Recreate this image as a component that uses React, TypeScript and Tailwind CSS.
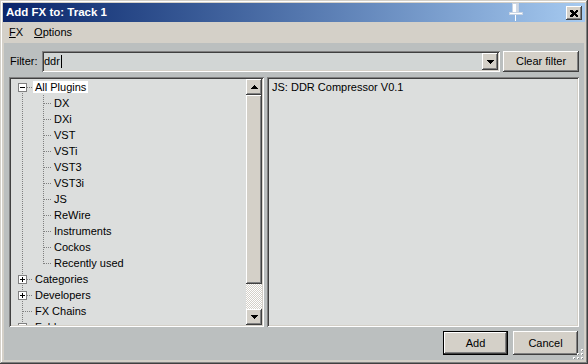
import React from 'react'

type Row = {
  label: string
  level: 0 | 1
  box?: 'minus' | 'plus'
  first?: boolean
  last?: boolean
  lastChild?: boolean
  selected?: boolean
}

const rows: Row[] = [
  { label: 'All Plugins', level: 0, box: 'minus', first: true, selected: true },
  { label: 'DX', level: 1 },
  { label: 'DXi', level: 1 },
  { label: 'VST', level: 1 },
  { label: 'VSTi', level: 1 },
  { label: 'VST3', level: 1 },
  { label: 'VST3i', level: 1 },
  { label: 'JS', level: 1 },
  { label: 'ReWire', level: 1 },
  { label: 'Instruments', level: 1 },
  { label: 'Cockos', level: 1 },
  { label: 'Recently used', level: 1, lastChild: true },
  { label: 'Categories', level: 0, box: 'plus' },
  { label: 'Developers', level: 0, box: 'plus' },
  { label: 'FX Chains', level: 0 },
  { label: 'Folders', level: 0, box: 'plus', last: true },
]

// classic 3d edges
const raised =
  'bg-[#d4d0c8] shadow-[inset_-1px_-1px_0_#404040,inset_1px_1px_0_#ffffff,inset_-2px_-2px_0_#808080,inset_2px_2px_0_#d4d0c8]'
const sunken =
  'shadow-[inset_1px_1px_0_#808080,inset_-1px_-1px_0_#ffffff,inset_2px_2px_0_#404040,inset_-2px_-2px_0_#d4d0c8]'

const dot = { stroke: '#808080', strokeWidth: 1, strokeDasharray: '1 1' }

function TreeLines({ row }: { row: Row }) {
  if (row.level === 1) {
    return (
      <svg width="41" height="16" className="shrink-0" shapeRendering="crispEdges">
        <line x1="11.5" y1="0" x2="11.5" y2="16" {...dot} />
        <line x1="32.5" y1="0" x2="32.5" y2={row.lastChild ? 9 : 16} {...dot} />
        <line x1="33" y1="8.5" x2="41" y2="8.5" {...dot} />
      </svg>
    )
  }
  return (
    <svg width="22" height="16" className="shrink-0" shapeRendering="crispEdges">
      <line
        x1="11.5"
        y1={row.first ? 12 : 0}
        x2="11.5"
        y2={row.last ? 4 : 16}
        {...dot}
      />
      <line x1={row.box ? 16 : 12} y1="8.5" x2="22" y2="8.5" {...dot} />
      {row.selected && <line x1="32.5" y1="14" x2="32.5" y2="16" {...dot} />}
      {row.box && (
        <>
          <rect x="7.5" y="4.5" width="8" height="8" fill="#ffffff" stroke="#808080" />
          <line x1="9" y1="8.5" x2="14" y2="8.5" stroke="#000" />
          {row.box === 'plus' && <line x1="11.5" y1="6" x2="11.5" y2="11" stroke="#000" />}
        </>
      )}
    </svg>
  )
}

function ChildLine() {
  return null
}

function Arrow({ up }: { up?: boolean }) {
  return (
    <svg width="7" height="4" shapeRendering="crispEdges">
      <polygon points={up ? '0,4 7,4 3.5,0' : '0,0 7,0 3.5,4'} fill="#000" />
    </svg>
  )
}

export default function App() {
  return (
    <div className="w-[588px] h-[364px] bg-[#d4d0c8] pt-[3px] px-[3px] pb-[4px] flex flex-col font-['Liberation_Sans',Arial,sans-serif] text-[11px] text-black shadow-[inset_-1px_-1px_0_#404040,inset_1px_1px_0_#d4d0c8,inset_-2px_-2px_0_#808080,inset_2px_2px_0_#ffffff] overflow-hidden select-none">
      {/* title bar */}
      <div className="h-[19px] shrink-0 flex items-center bg-linear-to-r from-[#0a246a] to-[#a6caf0] pl-[3px] pr-[3px] relative">
        <span className="text-white font-bold text-[11.5px] leading-none">Add FX to: Track 1</span>
        <div className="flex-1" />
        <svg width="14" height="19" className="mr-[43px] -mt-[1px]" shapeRendering="crispEdges">
          <rect x="3.5" y="0.5" width="6" height="9" fill="#ffffff" stroke="#c8d4e4" />
          <rect x="7" y="1" width="2" height="8" fill="#d0d8e4" />
          <rect x="0.5" y="9.5" width="13" height="2" fill="#ffffff" stroke="#c8d4e4" />
          <rect x="6" y="12" width="1" height="6" fill="#ffffff" />
        </svg>
        <div className={`w-[16px] h-[14px] mt-[1px] flex items-center justify-center ${raised}`}>
          <svg width="8" height="7" shapeRendering="crispEdges">
            <path d="M0 0h2l2 2 2-2h2v1l-2 2.5 2 2.5v1h-2l-2-2-2 2h-2v-1l2-2.5-2-2.5z" fill="#000" />
          </svg>
        </div>
      </div>

      {/* menu */}
      <div className="h-[21px] shrink-0 flex items-center gap-[11px] pl-[6px]">
        <span>
          <span className="underline underline-offset-1">F</span>X
        </span>
        <span>
          <span className="underline underline-offset-1">O</span>ptions
        </span>
      </div>

      {/* content */}
      <div className="flex-1 mx-px bg-[#bbbfbf] flex flex-col px-[5px] pt-[8px] relative">
        {/* filter row */}
        <div className="h-[21px] flex items-center">
          <span className="w-[33px] pl-px shrink-0">Filter:</span>
          <div className={`flex-1 h-[21px] bg-[#d2d6d5] p-[2px] flex ${sunken}`}>
            <div className="flex-1 flex items-center">
              <span>ddr</span>
              <span className="w-px h-[13px] bg-black ml-px" />
            </div>
            <div className={`w-[16px] h-full flex items-center justify-center ${raised}`}>
              <Arrow />
            </div>
          </div>
          <button className={`ml-[3px] w-[76px] h-[21px] shrink-0 flex items-center justify-center ${raised}`}>
            Clear filter
          </button>
        </div>

        {/* panels */}
        <div className="mt-[5px] h-[250px] flex gap-[3px]">
          <div className={`w-[255px] h-full p-[2px] flex bg-[#dcdedd] ${sunken}`}>
            <div className="flex-1 overflow-hidden">
              {rows.map((r) => (
                <div key={r.label} className="h-[16px] flex items-center">
                  <TreeLines row={r} />
                  <span
                    className={`h-[12px] flex items-center px-[2px] whitespace-nowrap ${
                      r.selected ? 'bg-white' : ''
                    }`}
                  >
                    {r.label}
                  </span>
                </div>
              ))}
              <ChildLine />
            </div>
            <div className="w-[16px] flex flex-col">
              <div className={`h-[16px] shrink-0 flex items-center justify-center ${raised}`}>
                <Arrow up />
              </div>
              <div className={`h-[189px] shrink-0 ${raised}`} />
              <div className="flex-1 bg-[repeating-conic-gradient(#d4d0c8_0_25%,#ffffff_0_50%)] bg-[length:2px_2px]" />
              <div className={`h-[16px] shrink-0 flex items-center justify-center ${raised}`}>
                <Arrow />
              </div>
            </div>
          </div>
          <div className={`flex-1 h-full p-[2px] bg-[#dcdedd] ${sunken}`}>
            <div className="h-[16px] flex items-center pl-[3px]">JS: DDR Compressor V0.1</div>
          </div>
        </div>

        {/* buttons */}
        <div className="mt-[4px] flex justify-end gap-[5px] pr-px">
          <button className="w-[65px] h-[24px] border border-black flex">
            <span className={`flex-1 flex items-center justify-center ${raised}`}>Add</span>
          </button>
          <button className={`w-[65px] h-[24px] flex items-center justify-center ${raised}`}>Cancel</button>
        </div>

        <svg width="12" height="12" className="absolute right-0 bottom-0" shapeRendering="crispEdges">
          {[
            [9, 1],
            [5, 5],
            [9, 5],
            [1, 9],
            [5, 9],
            [9, 9],
          ].map(([x, y]) => (
            <g key={`${x}-${y}`}>
              <rect x={x} y={y} width="2" height="2" fill="#ffffff" />
              <rect x={x + 1} y={y + 1} width="1" height="1" fill="#808080" />
            </g>
          ))}
        </svg>
      </div>
    </div>
  )
}
